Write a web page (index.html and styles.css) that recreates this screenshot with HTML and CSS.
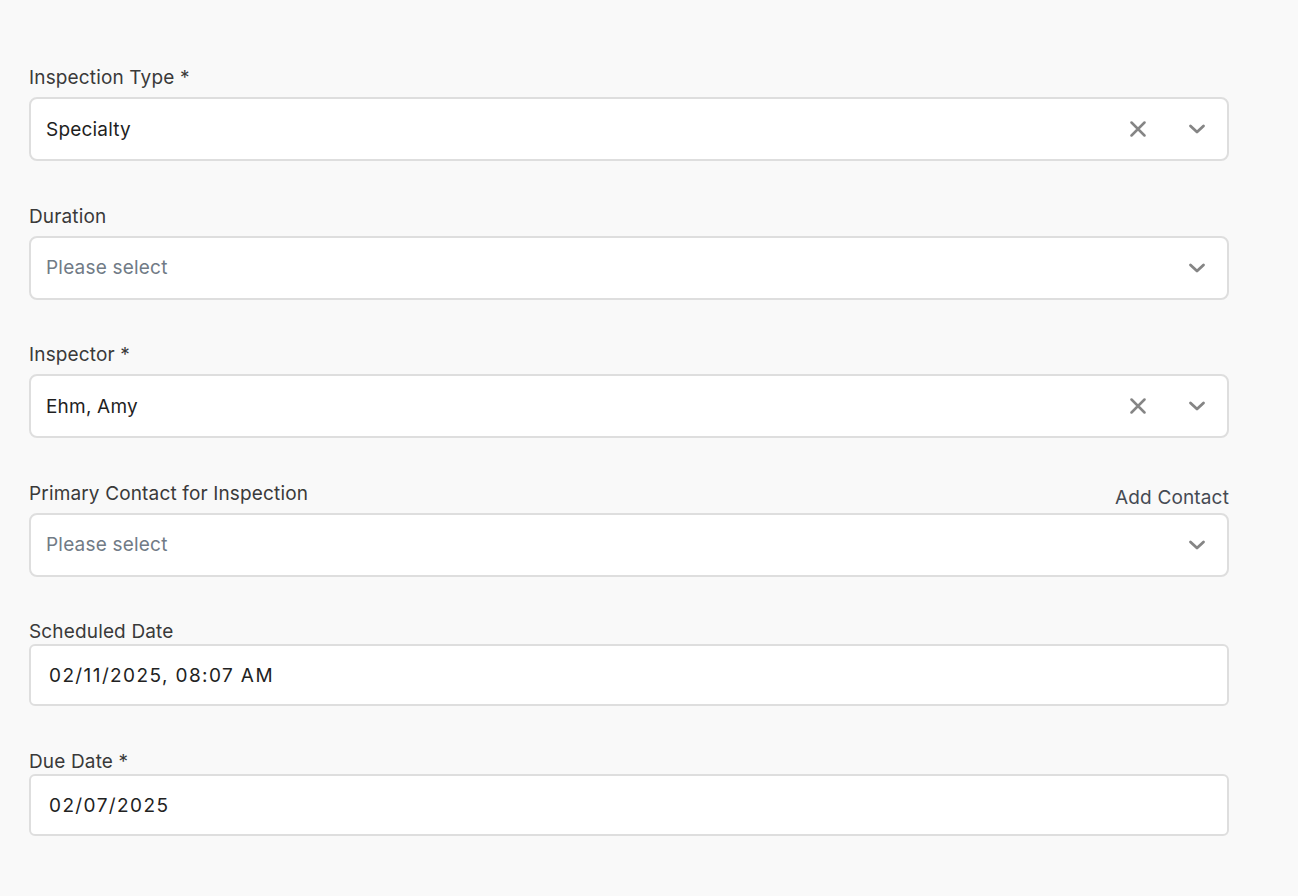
FILE: index.html
```html
<!DOCTYPE html>
<html>
<head>
<meta charset="utf-8">
<link rel="stylesheet" href="styles.css">
</head>
<body>
<form class="form">
  <div class="field">
    <div class="label-row"><label class="label">Inspection Type *</label></div>
    <div class="select">
      <span class="value">Specialty</span>
      <span class="icons">
        <svg class="icon-x" width="16" height="16" viewBox="0 0 16 16"><path d="M1.5 1.5L14.5 14.5M14.5 1.5L1.5 14.5" stroke="#858585" stroke-width="2.5" stroke-linecap="round"/></svg>
        <svg class="icon-chev" width="18" height="18" viewBox="0 0 18 18"><path d="M2.5 6L9 12L15.5 6" fill="none" stroke="#858585" stroke-width="2.8" stroke-linecap="round" stroke-linejoin="round"/></svg>
      </span>
    </div>
  </div>
  <div class="field">
    <div class="label-row"><label class="label">Duration</label></div>
    <div class="select">
      <span class="placeholder">Please select</span>
      <span class="icons">
        <svg class="icon-chev" width="18" height="18" viewBox="0 0 18 18"><path d="M2.5 6L9 12L15.5 6" fill="none" stroke="#858585" stroke-width="2.8" stroke-linecap="round" stroke-linejoin="round"/></svg>
      </span>
    </div>
  </div>
  <div class="field">
    <div class="label-row"><label class="label">Inspector *</label></div>
    <div class="select">
      <span class="value">Ehm, Amy</span>
      <span class="icons">
        <svg class="icon-x" width="16" height="16" viewBox="0 0 16 16"><path d="M1.5 1.5L14.5 14.5M14.5 1.5L1.5 14.5" stroke="#858585" stroke-width="2.5" stroke-linecap="round"/></svg>
        <svg class="icon-chev" width="18" height="18" viewBox="0 0 18 18"><path d="M2.5 6L9 12L15.5 6" fill="none" stroke="#858585" stroke-width="2.8" stroke-linecap="round" stroke-linejoin="round"/></svg>
      </span>
    </div>
  </div>
  <div class="field contact-field">
    <div class="label-row"><label class="label">Primary Contact for Inspection</label><a class="add-link">Add Contact</a></div>
    <div class="select">
      <span class="placeholder">Please select</span>
      <span class="icons">
        <svg class="icon-chev" width="18" height="18" viewBox="0 0 18 18"><path d="M2.5 6L9 12L15.5 6" fill="none" stroke="#858585" stroke-width="2.8" stroke-linecap="round" stroke-linejoin="round"/></svg>
      </span>
    </div>
  </div>
  <div class="field date-field">
    <div class="label-row"><label class="label">Scheduled Date</label></div>
    <div class="date-input"><span class="date-value">02/11/2025, 08:07 AM</span></div>
  </div>
  <div class="field date-field">
    <div class="label-row"><label class="label">Due Date *</label></div>
    <div class="date-input"><span class="date-value">02/07/2025</span></div>
  </div>
</form>
</body>
</html>
```
FILE: styles.css
```css
html, body {
  margin: 0;
  padding: 0;
  background: #f9f9f9;
}
body {
  font-family: Inter, "Noto Sans", sans-serif;
  color: #333;
}
.form {
  width: 1200px;
  padding: 66px 0 0 29px;
  display: flex;
  flex-direction: column;
}
.field {
  display: flex;
  flex-direction: column;
  margin-bottom: 43.5px;
}
.contact-field {
  margin-bottom: 43.5px;
}
.label-row {
  display: flex;
  justify-content: space-between;
  align-items: flex-end;
  height: 24px;
  margin-bottom: 7px;
}
.label {
  font-size: 19px;
  letter-spacing: 0.15px;
  color: #3a3a3a;
  line-height: 24px;
}
.add-link {
  font-size: 19px;
  letter-spacing: 0.15px;
  color: #454a53;
  line-height: 24px;
  position: relative;
  top: 4px;
}
.select {
  box-sizing: border-box;
  height: 64px;
  background: #fff;
  border: 2px solid #dedede;
  border-radius: 8px;
  display: flex;
  align-items: center;
  justify-content: space-between;
  padding: 0 21px 0 15px;
}
.value {
  font-size: 19px;
  letter-spacing: 0.2px;
  color: #1f1f1f;
}
.placeholder {
  font-size: 19px;
  letter-spacing: 0.2px;
  color: #717b86;
}
.icons {
  display: flex;
  align-items: center;
  gap: 42px;
}
.icons svg {
  display: block;
}
.date-field {
  margin-bottom: 44px;
}
.date-field .label-row {
  margin-bottom: 0;
}
.date-input {
  box-sizing: border-box;
  height: 62px;
  background: #fff;
  border: 2px solid #dedede;
  border-radius: 6px;
  display: flex;
  align-items: center;
  padding: 0 18px;
}
.date-value {
  font-size: 19px;
  color: #222;
  letter-spacing: 1.4px;
}
```
